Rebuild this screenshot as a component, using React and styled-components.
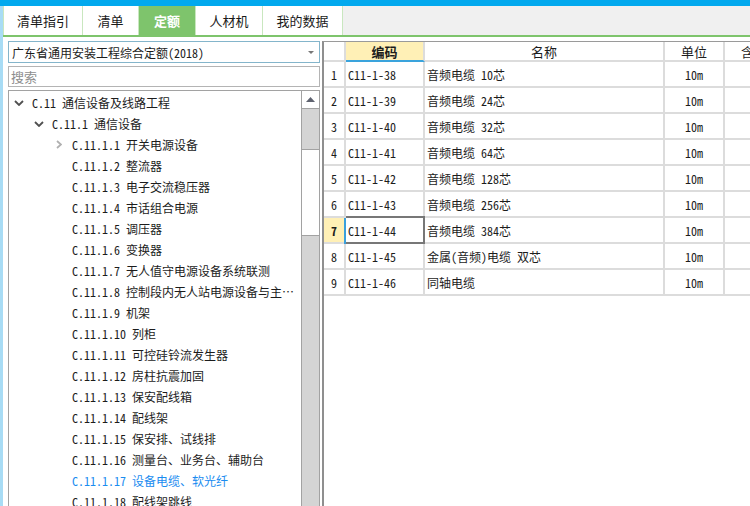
import React from 'react'
import styled, { createGlobalStyle } from 'styled-components'

const mono = `"Noto Sans Mono CJK SC", "Noto Sans CJK SC", "Liberation Mono", monospace`

const GlobalStyle = createGlobalStyle`
  html, body {
    margin: 0;
    padding: 0;
    background: #fff;
    overflow: hidden;
  }
  body {
    font-family: ${mono};
    font-size: 12px;
    color: #1c1c1c;
  }
`

const Page = styled.div`
  width: 750px;
  height: 506px;
  display: flex;
  flex-direction: column;
  overflow: hidden;
`

const TopBar = styled.div`
  height: 6px;
  background: #02a9ee;
  flex-shrink: 0;
`

const Frame = styled.div`
  flex: 1;
  display: flex;
  min-height: 0;
`

const EdgeStrip = styled.div`
  width: 3px;
  background: #a8dcf5;
  flex-shrink: 0;
`

const Main = styled.div`
  flex: 1;
  display: flex;
  flex-direction: column;
  min-width: 0;
`

const TabBar = styled.div`
  height: 29px;
  display: flex;
  background: #f0f0f0;
  border-bottom: 2px solid #7ec46c;
  flex-shrink: 0;
`

const Tab = styled.div`
  width: ${p => p.$w}px;
  box-sizing: border-box;
  display: flex;
  align-items: center;
  justify-content: center;
  background: ${p => (p.$active ? '#7ec46c' : '#fff')};
  color: ${p => (p.$active ? '#fff' : '#1a1a1a')};
  font-weight: ${p => (p.$active ? 700 : 400)};
  border-right: 1px solid #c9e7bf;
  font-family: "Noto Sans CJK SC", sans-serif;
  font-size: 13px;
  &:first-child {
    border-left: 1px solid #c9e7bf;
  }
`

const Body = styled.div`
  flex: 1;
  display: flex;
  min-height: 0;
`

const LeftPanel = styled.div`
  width: 319px;
  box-sizing: border-box;
  padding: 4px 2px 0 5px;
  display: flex;
  flex-direction: column;
  gap: 3px;
  flex-shrink: 0;
`

const Select = styled.div`
  height: 22px;
  box-sizing: border-box;
  border: 1px solid #84b5cb;
  display: flex;
  align-items: center;
  justify-content: space-between;
  padding: 0 5px 0 3px;
  white-space: nowrap;
`

const Caret = styled.span`
  width: 0;
  height: 0;
  border-left: 3px solid transparent;
  border-right: 3px solid transparent;
  border-top: 3px solid #777;
`

const Search = styled.div`
  height: 21px;
  box-sizing: border-box;
  border: 1px solid #b4b4b4;
  display: flex;
  align-items: center;
  padding-left: 2px;
  color: #8e8e8e;
  font-size: 13px;
`

const Tree = styled.div`
  flex: 1;
  min-height: 0;
  display: flex;
  border: 1px solid #a2a2a2;
  border-bottom: none;
  overflow: hidden;
`

const TreeList = styled.div`
  flex: 1;
  min-width: 0;
  padding-top: 1px;
`

const TreeRow = styled.div`
  height: 21px;
  display: flex;
  align-items: center;
  padding-left: ${p => 5 + p.$level * 20}px;
  color: ${p => (p.$active ? '#1a8cf0' : '#1c1c1c')};
  white-space: nowrap;
`

const Toggle = styled.span`
  width: 10px;
  height: 10px;
  display: flex;
  align-items: center;
  justify-content: center;
  margin-right: 8px;
  flex-shrink: 0;
`

const Label = styled.span`
  overflow: hidden;
  text-overflow: ellipsis;
  min-width: 0;
  padding-right: 2px;
`

const ScrollBar = styled.div`
  width: 17px;
  flex-shrink: 0;
  display: flex;
  flex-direction: column;
  border-left: 1px solid #a2a2a2;
  background: #d4d4d4;
`

const ScrollButton = styled.div`
  height: 18px;
  background: #fff;
  border-bottom: 1px solid #a2a2a2;
  box-sizing: border-box;
  display: flex;
  align-items: center;
  justify-content: center;
`

const Thumb = styled.div`
  margin-top: 40px;
  height: 85px;
  background: #fff;
  border-top: 1px solid #a2a2a2;
  border-bottom: 1px solid #a2a2a2;
`

const TablePanel = styled.div`
  flex: 1;
  min-width: 0;
  margin-top: 4px;
  border-top: 1px solid #9a9a9a;
  border-left: 2px solid #8f8f8f;
  overflow: hidden;
`

const Grid = styled.div`
  display: grid;
  grid-template-columns: 22px 79px 240px 60px 60px;
  grid-template-rows: 20px;
  grid-auto-rows: 26px;
  width: 461px;
`

const Cell = styled.div`
  box-sizing: border-box;
  border-right: 2px solid #dcdcdc;
  border-bottom: 2px solid #dcdcdc;
  display: flex;
  align-items: center;
  justify-content: ${p => p.$align || 'flex-start'};
  padding: 0 ${p => (p.$align ? 0 : 2)}px;
  white-space: nowrap;
  overflow: hidden;
  background: ${p => (p.$marked ? '#fff0b6' : '#fff')};
  font-weight: ${p => (p.$marked ? 700 : 400)};
  ${p =>
    p.$selected &&
    `
    overflow: visible;
    border-right-color: #777;
    border-bottom-color: #777;
    box-shadow: -2px 0 0 #3aa0dc, 0 -2px 0 #777;
  `}
`

const HeadCell = styled(Cell)`
  justify-content: center;
  font-size: 13px;
  font-family: "Noto Sans CJK SC", sans-serif;
  background: ${p => (p.$key ? '#fff0b6' : '#fff')};
  font-weight: ${p => (p.$key ? 700 : 400)};
  border-bottom: 2px solid ${p => (p.$key ? '#3aa3dc' : '#dcdcdc')};
`

const tabs = [
  { label: '清单指引', w: 80 },
  { label: '清单', w: 56 },
  { label: '定额', w: 57, active: true },
  { label: '人材机', w: 67 },
  { label: '我的数据', w: 80 },
]

const tree = [
  { level: 0, code: 'C.11', name: '通信设备及线路工程', toggle: 'down' },
  { level: 1, code: 'C.11.1', name: '通信设备', toggle: 'down' },
  { level: 2, code: 'C.11.1.1', name: '开关电源设备', toggle: 'right' },
  { level: 2, code: 'C.11.1.2', name: '整流器' },
  { level: 2, code: 'C.11.1.3', name: '电子交流稳压器' },
  { level: 2, code: 'C.11.1.4', name: '市话组合电源' },
  { level: 2, code: 'C.11.1.5', name: '调压器' },
  { level: 2, code: 'C.11.1.6', name: '变换器' },
  { level: 2, code: 'C.11.1.7', name: '无人值守电源设备系统联测' },
  { level: 2, code: 'C.11.1.8', name: '控制段内无人站电源设备与主控联测' },
  { level: 2, code: 'C.11.1.9', name: '机架' },
  { level: 2, code: 'C.11.1.10', name: '列柜' },
  { level: 2, code: 'C.11.1.11', name: '可控硅铃流发生器' },
  { level: 2, code: 'C.11.1.12', name: '房柱抗震加固' },
  { level: 2, code: 'C.11.1.13', name: '保安配线箱' },
  { level: 2, code: 'C.11.1.14', name: '配线架' },
  { level: 2, code: 'C.11.1.15', name: '保安排、试线排' },
  { level: 2, code: 'C.11.1.16', name: '测量台、业务台、辅助台' },
  { level: 2, code: 'C.11.1.17', name: '设备电缆、软光纤', active: true },
  { level: 2, code: 'C.11.1.18', name: '配线架跳线' },
]

const rows = [
  ['C11-1-38', '音频电缆 10芯'],
  ['C11-1-39', '音频电缆 24芯'],
  ['C11-1-40', '音频电缆 32芯'],
  ['C11-1-41', '音频电缆 64芯'],
  ['C11-1-42', '音频电缆 128芯'],
  ['C11-1-43', '音频电缆 256芯'],
  ['C11-1-44', '音频电缆 384芯'],
  ['C11-1-45', '金属(音频)电缆 双芯'],
  ['C11-1-46', '同轴电缆'],
]

const Chevron = ({ dir }) =>
  dir === 'down' ? (
    <svg width="10" height="6" viewBox="0 0 10 6">
      <path d="M1 1 L5 5 L9 1" fill="none" stroke="#505050" strokeWidth="1.8" />
    </svg>
  ) : (
    <svg width="6" height="9" viewBox="0 0 6 9">
      <path d="M1 1 L5 4.5 L1 8" fill="none" stroke="#b0b0b0" strokeWidth="1.8" />
    </svg>
  )

const App = () => {
  return (
    <Page>
      <GlobalStyle />
      <TopBar />
      <Frame>
        <EdgeStrip />
        <Main>
          <TabBar>
            {tabs.map(t => (
              <Tab key={t.label} $w={t.w} $active={t.active}>
                {t.label}
              </Tab>
            ))}
          </TabBar>
          <Body>
            <LeftPanel>
              <Select>
                <span>广东省通用安装工程综合定额(2018)</span>
                <Caret />
              </Select>
              <Search>搜索</Search>
              <Tree>
                <TreeList>
                  {tree.map(n => (
                    <TreeRow key={n.code} $level={n.level} $active={n.active}>
                      <Toggle>{n.toggle && <Chevron dir={n.toggle} />}</Toggle>
                      <Label>
                        {n.code} {n.name}
                      </Label>
                    </TreeRow>
                  ))}
                </TreeList>
                <ScrollBar>
                  <ScrollButton>
                    <svg width="9" height="5" viewBox="0 0 9 5">
                      <path d="M0 5 L4.5 0 L9 5 Z" fill="#5f6370" />
                    </svg>
                  </ScrollButton>
                  <Thumb />
                </ScrollBar>
              </Tree>
            </LeftPanel>
            <TablePanel>
              <Grid>
                <HeadCell />
                <HeadCell $key>编码</HeadCell>
                <HeadCell>名称</HeadCell>
                <HeadCell>单位</HeadCell>
                <HeadCell>含量</HeadCell>
                {rows.map(([code, name], i) => {
                  const sel = i === 6
                  return (
                    <React.Fragment key={code}>
                      <Cell $align="center" $marked={sel}>
                        {i + 1}
                      </Cell>
                      <Cell $selected={sel}>{code}</Cell>
                      <Cell>{name}</Cell>
                      <Cell $align="center">10m</Cell>
                      <Cell />
                    </React.Fragment>
                  )
                })}
              </Grid>
            </TablePanel>
          </Body>
        </Main>
      </Frame>
    </Page>
  )
}

export default App
